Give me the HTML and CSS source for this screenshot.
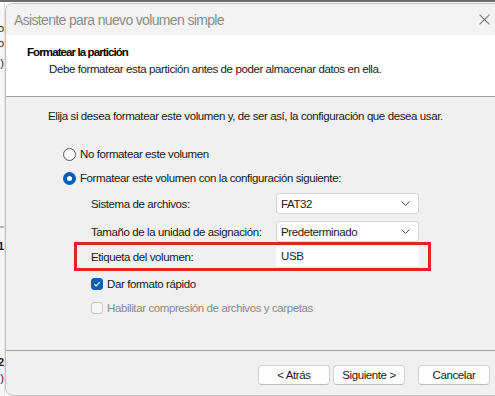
FILE: index.html
```html
<!DOCTYPE html>
<html lang="es">
  <head>
    <meta charset="UTF-8" />
    <meta name="viewport" content="width=device-width, initial-scale=1.0" />
    <title>Asistente para nuevo volumen simple</title>
    <link rel="stylesheet" href="styles.css">
  </head>
  <body>
    <div class="screen">
      <div class="top-strip"></div>

      <!-- Window behind the dialog -->
      <aside class="backdrop">
        <span class="frag frag-1">o</span>
        <span class="frag frag-2">o</span>
        <span class="frag frag-3">)</span>
        <span class="frag-line"></span>
        <span class="frag frag-4">1</span>
        <span class="frag frag-5">2</span>
        <span class="frag frag-6">:)</span>
      </aside>

      <div class="dialog">
        <div class="titlebar">
          <span class="title">Asistente para nuevo volumen simple</span>
          <svg class="close" viewBox="0 0 10 10">
            <path d="M0.5 0.5L9.5 9.5M9.5 0.5L0.5 9.5" />
          </svg>
        </div>

        <div class="header">
          <h1>Formatear la partición</h1>
          <p>Debe formatear esta partición antes de poder almacenar datos en ella.</p>
        </div>

        <div class="content">
          <p class="intro">Elija si desea formatear este volumen y, de ser así, la configuración que desea usar.</p>

          <div class="choice">
            <span class="radio"></span>
            <span>No formatear este volumen</span>
          </div>
          <div class="choice">
            <span class="radio checked"></span>
            <span>Formatear este volumen con la configuración siguiente:</span>
          </div>

          <div class="settings">
            <div class="field">
              <span class="label">Sistema de archivos:</span>
              <div class="combo">
                <span>FAT32</span>
                <svg class="chevron" viewBox="0 0 9 5"><path d="M0.5 0.5L4.5 4.5L8.5 0.5" /></svg>
              </div>
            </div>
            <div class="field">
              <span class="label">Tamaño de la unidad de asignación:</span>
              <div class="combo">
                <span>Predeterminado</span>
                <svg class="chevron" viewBox="0 0 9 5"><path d="M0.5 0.5L4.5 4.5L8.5 0.5" /></svg>
              </div>
            </div>
            <div class="field highlighted">
              <span class="label">Etiqueta del volumen:</span>
              <div class="textbox">USB</div>
            </div>
          </div>

          <div class="check">
            <span class="box checked">
              <svg viewBox="0 0 12 12"><path d="M2.8 6.2L5 8.3L9.3 3.8" /></svg>
            </span>
            <span>Dar formato rápido</span>
          </div>
          <div class="check disabled">
            <span class="box"></span>
            <span>Habilitar compresión de archivos y carpetas</span>
          </div>
        </div>

        <div class="footer">
          <button class="btn btn-back">&lt; Atrás</button>
          <button class="btn">Siguiente &gt;</button>
          <button class="btn btn-cancel">Cancelar</button>
        </div>
      </div>
    </div>
  </body>
</html>
```

FILE: styles.css
```css
* {
  margin: 0;
  padding: 0;
  box-sizing: border-box;
}

body {
  font-family: "Liberation Sans", Arial, sans-serif;
  font-size: 11.5px;
  letter-spacing: -0.4px;
  color: #1a1a1a;
  background: #fafafa;
  width: 495px;
  height: 396px;
  overflow: hidden;
}

.screen {
  display: grid;
  grid-template-columns: 5px 500px;
  grid-template-rows: 3px 393px;
  height: 396px;
}

.top-strip {
  grid-column: 1 / 3;
  border-top: 2px solid #6b6b6b;
  background: #fcfcfc;
}

/* Window peeking out on the left */
.backdrop {
  position: relative;
  overflow: hidden;
  background: #f7f7f7;
  border-right: 1px solid #e2e2e2;
}

.frag {
  position: absolute;
  right: 0;
  font-size: 11px;
  line-height: 14px;
  letter-spacing: 0;
  color: #202020;
}

.frag-1 { top: 18px; }
.frag-2 { top: 33px; }
.frag-3 { top: 53px; }
.frag-4 { top: 236px; font-weight: bold; color: #101040; }
.frag-5 { top: 352px; font-weight: bold; }
.frag-6 { top: 368px; }

.frag-line {
  position: absolute;
  top: 223px;
  left: 0;
  width: 5px;
  height: 2px;
  background: #b4b4b4;
}

/* Dialog */
.dialog {
  background: #f0f0f0;
  border: 1px solid #c4c4c4;
  border-radius: 8px;
  overflow: hidden;
  display: flex;
  flex-direction: column;
}

.titlebar {
  height: 31px;
  background: #f3f3f3;
  display: flex;
  align-items: center;
  padding-left: 8px;
}

.title {
  font-size: 14px;
  color: #8c8c8c;
  letter-spacing: -0.65px;
}

.close {
  width: 11px;
  height: 11px;
  margin-left: auto;
  margin-right: 14px;
  fill: none;
  stroke: #7a7a7a;
  stroke-width: 1;
}

.header {
  height: 62px;
  background: #ffffff;
  border-bottom: 1px solid #a0a0a0;
  padding: 9px 0 0 21px;
}

.header h1 {
  font-size: 11.5px;
  font-weight: bold;
  line-height: 16px;
  letter-spacing: -0.9px;
  color: #000;
}

.header p {
  line-height: 16px;
  margin: 1px 0 0 22px;
  color: #1a1a1a;
}

.content {
  height: 253px;
  padding-top: 11px;
}

.intro {
  line-height: 16px;
  margin-left: 42px;
}

.choice {
  display: flex;
  align-items: center;
  gap: 4px;
  height: 20px;
  margin-left: 57px;
}

.choice:first-of-type {
  margin-top: 20px;
}

.choice + .choice {
  margin-top: 4px;
}

.radio {
  width: 13px;
  height: 13px;
  border: 1px solid #555;
  border-radius: 50%;
  background: #fbfbfb;
}

.radio.checked {
  border: 4px solid #005fb8;
  background: #fff;
}

.settings {
  width: 357px;
  margin: 5px 0 0 68px;
}

.field {
  display: flex;
  align-items: center;
  height: 21px;
  padding-left: 17px;
}

.field + .field {
  margin-top: 7px;
}

.field.highlighted {
  height: 29px;
  margin-top: 0;
  border: 3px solid #e3202b;
  padding-left: 14px;
}

.label {
  flex: 0 0 185px;
  white-space: nowrap;
}

.combo,
.textbox {
  width: 143px;
  height: 21px;
  background: #fff;
  display: flex;
  align-items: center;
  padding-left: 4px;
}

.combo {
  border: 1px solid #d6d6d6;
  border-radius: 3px;
}

.textbox {
  height: 22px;
  border-bottom: 1px solid #e6e6e6;
  padding-left: 5px;
}

.chevron {
  width: 9px;
  height: 5px;
  margin-left: auto;
  margin-right: 8px;
  fill: none;
  stroke: #555;
  stroke-width: 1;
}

.check {
  display: flex;
  align-items: center;
  gap: 4px;
  height: 20px;
  margin: 3px 0 0 85px;
}

.check + .check {
  margin-top: 4px;
}

.box {
  width: 12px;
  height: 12px;
  border: 1px solid #c6c6c6;
  border-radius: 3px;
  background: #f6f6f6;
  display: flex;
}

.box.checked {
  background: #005fb8;
  border-color: #005fb8;
}

.box svg {
  width: 10px;
  height: 10px;
  fill: none;
  stroke: #fff;
  stroke-width: 1.3;
}

.check.disabled {
  color: #8a8a8a;
}

.footer {
  flex: 1;
  border-top: 1px solid #a0a0a0;
  display: flex;
  align-items: flex-start;
  padding-top: 14px;
}

.btn {
  font: inherit;
  letter-spacing: -0.4px;
  color: #1a1a1a;
  width: 72px;
  height: 20px;
  background: #fdfdfd;
  border: 1px solid #d0d0d0;
  border-bottom-color: #bcbcbc;
  border-radius: 4px;
}

.btn-back {
  margin-left: 252px;
}

.btn + .btn {
  margin-left: 3px;
}

.btn.btn-cancel {
  margin-left: 13px;
}
```
